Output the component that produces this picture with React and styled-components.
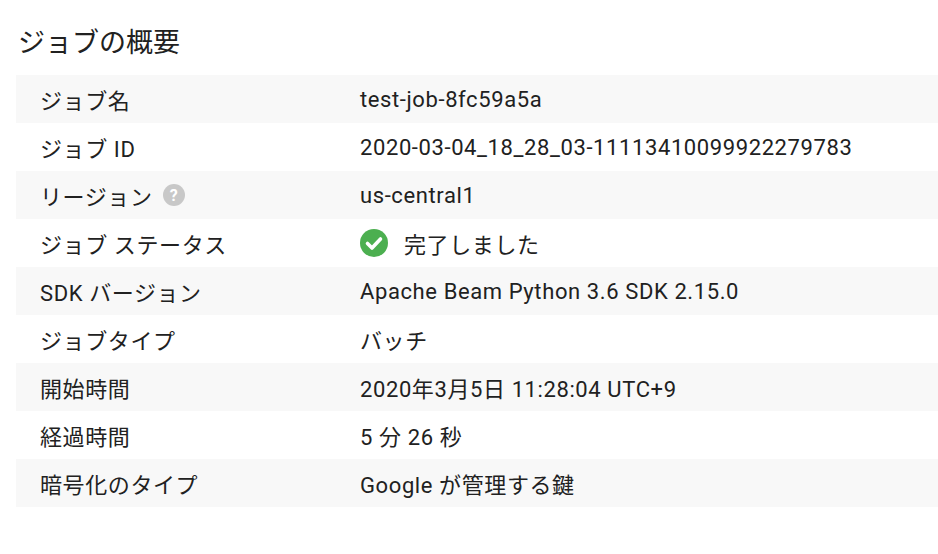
import React from "react";
import styled, { createGlobalStyle } from "styled-components";

const Global = createGlobalStyle`
  body { margin: 0; background: #fff; font-family: Roboto, "Noto Sans CJK JP", sans-serif; color: #212121; }
`;
const Page = styled.div`padding: 23px 0 0 16px;`;
const Title = styled.h2`
  margin: 0 0 12px 2px; font-size: 27px; font-weight: 400; line-height: 40px;
`;
const Table = styled.div`display: flex; flex-direction: column;`;
const Row = styled.div`
  display: grid; grid-template-columns: 320px 1fr; align-items: center;
  height: 48px; padding-left: 24px; font-size: 22px; letter-spacing: 0.6px;
  background: ${p => (p.$shade ? "#f8f8f8" : "#fff")};
`;
const Label = styled.div`display: flex; align-items: center; gap: 10px;`;
const Value = styled.div`display: flex; align-items: center; gap: 16px;`;

const Help = () => (
  <svg width="22" height="22" viewBox="0 0 22 22">
    <circle cx="11" cy="11" r="11" fill="#c8c8c8" />
    <text x="11" y="16.5" textAnchor="middle" fontSize="16" fontWeight="700" fill="#fff" fontFamily="Roboto, sans-serif">?</text>
  </svg>
);
const Check = () => (
  <svg width="28" height="28" viewBox="0 0 28 28">
    <circle cx="14" cy="14" r="14" fill="#4caf50" />
    <path d="M7.5 14.5 L12 19 L20.5 10" stroke="#fff" strokeWidth="3.6" fill="none" strokeLinecap="round" strokeLinejoin="round" />
  </svg>
);

const rows = [
  ["ジョブ名", "test-job-8fc59a5a"],
  ["ジョブ ID", "2020-03-04_18_28_03-11113410099922279783"],
  ["リージョン", "us-central1", "help"],
  ["ジョブ ステータス", "完了しました", "check"],
  ["SDK バージョン", "Apache Beam Python 3.6 SDK 2.15.0"],
  ["ジョブタイプ", "バッチ"],
  ["開始時間", "2020年3月5日 11:28:04 UTC+9"],
  ["経過時間", "5 分 26 秒"],
  ["暗号化のタイプ", "Google が管理する鍵"],
];

export default function App() {
  return (
    <>
      <Global />
      <Page>
        <Title>ジョブの概要</Title>
        <Table>
          {rows.map(([l, v, x], i) => (
            <Row key={l} $shade={i % 2 === 0}>
              <Label>{l}{x === "help" && <Help />}</Label>
              <Value>{x === "check" && <Check />}{v}</Value>
            </Row>
          ))}
        </Table>
      </Page>
    </>
  );
}
